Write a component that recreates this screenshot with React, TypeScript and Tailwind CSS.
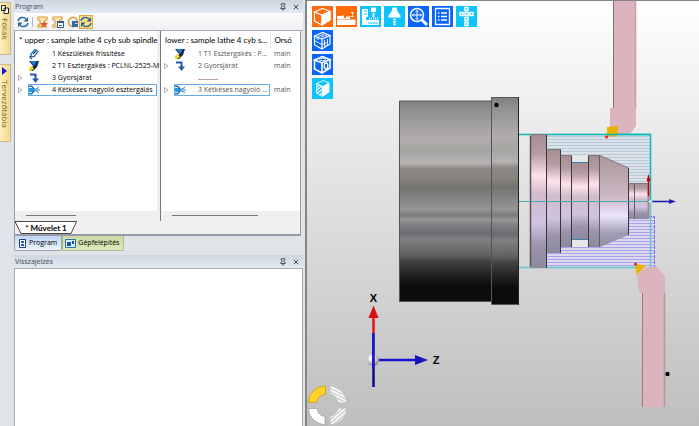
import { ReactNode } from "react";
import { Pin, X } from "lucide-react";

interface Operation {
  label: string;
  icon?: "clamp" | "tool" | "rapid" | "twin";
  expandable?: boolean;
  selected?: boolean;
  spindle?: string;
}

const UPPER: Operation[] = [
  { label: "1 Készülékek frissítése", icon: "clamp" },
  { label: "2 T1 Esztergakés : PCLNL-2525-M", icon: "tool" },
  { label: "3 Gyorsjárat", icon: "rapid", expandable: true },
  {
    label: "4 Kétkéses nagyoló esztergálás",
    icon: "twin",
    expandable: true,
    selected: true,
  },
];

const LOWER: Operation[] = [
  { label: "1 T1 Esztergakés : P...", icon: "tool", spindle: "main" },
  { label: "2 Gyorsjárat", icon: "rapid", expandable: true, spindle: "main" },
  { label: ".........." },
  {
    label: "3 Kétkéses nagyoló ...",
    icon: "twin",
    expandable: true,
    selected: true,
    spindle: "main",
  },
];

// ---------- Small icons ----------
function OperationIcon({ name }: { name: Operation["icon"] }) {
  return (
    <svg viewBox="0 0 12 12" className="h-3 w-3 shrink-0">
      {name === "clamp" && (
        <g fill="none" stroke="#2d6bb5" strokeWidth="1.3">
          <path d="m3 6 4-4.500 3 2-4 5.500-3-1z" />
          <path d="m5 6 3-3M3 8l-1 1 2 2" stroke="#17457e" />
        </g>
      )}
      {name === "tool" && (
        <g>
          <path d="M1 1h10L9 7l-4 4H2l3-5z" fill="#14294a" />
          <path d="M2 1h7L6 6z" fill="#2878cf" />
          <path d="m1 8 3-2 2 3-3 2H1z" fill="#f2d51d" />
        </g>
      )}
      {name === "rapid" && (
        <g>
          <path d="M2 2.500h5.500V8" fill="none" stroke="#2758a5" strokeWidth="2" />
          <path d="M4 6.500h7L7.500 11z" fill="#2758a5" />
        </g>
      )}
      {name === "twin" && (
        <g>
          <path d="M1 4h4l3 2-3 2H1z" fill="#1d9be0" />
          <path d="M1 1.500h3L7 5H5L3.500 3H1zM1 10.500h3L7 7H5L3.500 9H1z" fill="#2a69a8" />
          <path d="M7 6h5M7.500 5 11 3.500M7.500 7 11 8.500" fill="none" stroke="#3f7cb5" />
        </g>
      )}
    </svg>
  );
}

function RefreshIcon() {
  return (
    <svg viewBox="0 0 12 12" className="h-3 w-3">
      <path
        d="M1 5c1-4 6-4.500 8-2M11 7c-1 4-6 4.500-8 2"
        fill="none"
        stroke="#2b6fa5"
        strokeWidth="1.500"
      />
      <path d="M11 1v4.500H6.500zM1 11V6.500h4.500z" fill="#25628f" />
    </svg>
  );
}

function ScriptIcon({ kind }: { kind: "star" | "sheet" | "clock" }) {
  return (
    <svg viewBox="0 0 12 12" className="h-3 w-3">
      {kind === "clock" ? (
        <circle cx="6" cy="6" r="4.600" fill="#e8edf2" stroke="#e0a23a" strokeWidth="1.600" />
      ) : (
        <path
          d="M1 1h9v3H8v7H1V9h2V4H1z"
          fill="#ffe9b5"
          stroke="#dc9a35"
          strokeWidth="1.100"
        />
      )}
      {kind === "star" && (
        <path d="m7 5 1 2h3L9 9l1 3-3-2-3 2 1-3-2-2h3z" fill="#e65c1c" />
      )}
      {kind === "sheet" && (
        <g>
          <path d="M5.500 5.500h6v6h-6z" fill="#fff" stroke="#2c5f9c" />
          <path d="M5 5h7v2H5zM7 9h3v1H7z" fill="#2c5f9c" />
        </g>
      )}
      {kind === "clock" && <path d="M5 5h6v2H8v1h3v3H5z" fill="#2f69a6" />}
    </svg>
  );
}

// ---------- Dock panels ----------
function PanelTitle({ children }: { children: ReactNode }) {
  return (
    <header className="flex h-[13px] shrink-0 items-center bg-linear-to-b from-[#cdd6df] to-[#e2eaf3] pr-[3px] pl-px text-[#444a52]">
      <h2 className="flex-1">{children}</h2>
      <button type="button" aria-label="Rögzítés" className="mr-[5px]">
        <Pin className="h-2 w-2" strokeWidth={3} />
      </button>
      <button type="button" aria-label="Bezárás">
        <X className="h-2 w-2" strokeWidth={3} />
      </button>
    </header>
  );
}

function OperationTable({
  title,
  rows,
  muted,
}: {
  title: string;
  rows: Operation[];
  muted?: boolean;
}) {
  return (
    <table className="w-full table-fixed border-collapse text-left">
      <thead className="font-[Lato,sans-serif] text-[8px]">
        <tr className="h-[17px]">
          <th className="py-0 pr-0 pl-[4px] font-normal whitespace-nowrap text-black">{title}</th>
          {muted && (
            <th className="w-[30px] border-l border-[#e8e8e8] py-0 pr-0 pl-[4px] font-normal text-black">
              Orsó
            </th>
          )}
        </tr>
      </thead>
      <tbody className={muted ? "text-[#555]" : "text-black"}>
        {rows.map((row) => (
          <tr key={row.label} className="h-[12px]">
            <td className="p-0">
              <div className="flex h-[12px] items-center">
                <span className="flex w-[13px] shrink-0 justify-center">
                  {row.expandable && (
                    <svg viewBox="0 0 5 6" className="mr-[3px] h-[6px] w-[5px]">
                      <path d="M.5.5 4 3 .5 5.500z" fill="#fff" stroke="#999" strokeWidth=".8" />
                    </svg>
                  )}
                </span>
                <div
                  className={
                    row.selected
                      ? "flex h-[12px] min-w-0 flex-1 items-center outline outline-[#67aee8] -outline-offset-1"
                      : "flex h-[12px] min-w-0 flex-1 items-center"
                  }
                >
                  <OperationIcon name={row.icon} />
                  {row.icon ? (
                    <span className="ml-[12px] whitespace-nowrap">{row.label}</span>
                  ) : (
                    <span className="ml-[12px] font-bold text-[#7a2a78]">{row.label}</span>
                  )}
                </div>
              </div>
            </td>
            {muted && <td className="py-0 pr-0 pl-[4px]">{row.spindle}</td>}
          </tr>
        ))}
      </tbody>
    </table>
  );
}

function ProgramPanel() {
  return (
    <section className="flex h-[251px] shrink-0 flex-col">
      <PanelTitle>Program</PanelTitle>
      <div className="flex h-[18px] shrink-0 items-center border-b border-[#a8adb5] bg-linear-to-b from-[#fdfdfe] to-[#eef0f3] pl-[3px]">
        <button type="button" aria-label="Frissítés">
          <RefreshIcon />
        </button>
        <span className="mr-[4px] ml-[3px] h-[10px] w-px bg-[#b5b9be]" />
        <div className="flex items-center gap-[3px]">
          <button type="button" aria-label="Új">
            <ScriptIcon kind="star" />
          </button>
          <button type="button" aria-label="Lista">
            <ScriptIcon kind="sheet" />
          </button>
          <button type="button" aria-label="Idő">
            <ScriptIcon kind="clock" />
          </button>
        </div>
        <button
          type="button"
          aria-label="Automatikus frissítés"
          aria-pressed="true"
          className="border border-[#dfa93c] bg-[#ffdf83]"
        >
          <RefreshIcon />
        </button>
      </div>

      <div className="mr-[2px] flex min-h-0 flex-1 flex-col border-r border-b-2 border-l border-[#959ba8] bg-[#efefef]">
        <div className="flex min-h-0 flex-1">
          <div className="flex w-[142px] flex-col">
            <div className="flex-1 bg-white">
              <OperationTable title="* upper : sample lathe 4 cyb sub spindle" rows={UPPER} />
            </div>
            <div className="h-[10px]">
              <div className="mt-[4px] ml-[11px] h-px w-[50px] bg-[#777]" />
            </div>
          </div>
          <div className="ml-[3px] flex min-w-0 flex-1 flex-col border-l border-[#777]">
            <div className="flex-1 bg-white">
              <OperationTable title="lower : sample lathe 4 cyb s..." rows={LOWER} muted />
            </div>
            <div className="h-[10px]">
              <div className="mt-[4px] ml-[11px] h-px w-[86px] bg-[#777]" />
            </div>
          </div>
        </div>
        <button
          type="button"
          className="relative h-[13px] w-[62px] font-[Lato,sans-serif] text-[8px] font-bold text-black"
        >
          <svg viewBox="0 0 62 13" className="absolute inset-0 h-full w-full">
            <path d="M0 .5h61.500L56 12.500H6z" fill="#fff" stroke="#333" strokeWidth=".9" />
          </svg>
          <span className="relative">* Művelet 1</span>
        </button>
      </div>

      <nav className="flex h-[15px] shrink-0">
        <button
          type="button"
          className="flex items-center gap-[3px] rounded-b-[2px] border border-t-0 border-[#9aa1aa] bg-linear-to-b from-[#bfd4f4] to-[#edf4fc] px-[4px] text-black"
        >
          <svg viewBox="0 0 7 9" className="h-[9px] w-[7px]">
            <path d="M.5.5h6v8h-6z" fill="#fff" stroke="#223f9e" />
            <path d="M2 2h3v2H2zM2 5h3v2H2z" fill="#2850d8" />
          </svg>
          Program
        </button>
        <button
          type="button"
          className="flex items-center gap-[2px] rounded-b-[2px] border border-t-0 border-[#abc088] bg-linear-to-b from-[#cbdca6] to-[#d9e8b8] pr-[4px] pl-[2px] text-black"
        >
          <svg viewBox="0 0 11 9" className="h-[9px] w-[11px]">
            <path d="M.5.5h10v8H.5z" fill="#d6ebfb" stroke="#3170ad" />
            <path d="M2 3h4v4H2zM7 2h2v3H7z" fill="#195a9c" />
          </svg>
          Gépfelépítés
        </button>
      </nav>
    </section>
  );
}

// ---------- View toolbar ----------
function ViewButton({
  label,
  className,
  children,
}: {
  label: string;
  className: string;
  children: ReactNode;
}) {
  return (
    <button type="button" aria-label={label} className={`h-[21px] w-[21px] ${className}`}>
      <svg viewBox="0 0 21 21" fill="none" stroke="#fff" className="h-full w-full">
        {children}
      </svg>
    </button>
  );
}

function ViewToolbar() {
  return (
    <div className="absolute top-[5px] left-[5px] flex flex-col gap-[3px]">
      <div className="flex gap-[3px]">
        <ViewButton label="Munkadarab" className="bg-[#ff6a0a]">
          <path d="m2.500 6 8-3.500 7.500 3-8 3.500zM2.500 6v9l7.500 4V9M18 5.500V14l-8 5" strokeWidth="1.300" />
          <path d="m10 9 8-3.500V14l-8 5z" fill="#fff" />
        </ViewButton>
        <ViewButton label="Gép" className="bg-[#ff6a0a]">
          <path d="M1 13.500h18.500V19H1zM1 10h4v2H1zM5 9.500h3V12H5zM10 10.500h4V12h-4z" fill="#fff" stroke="none" />
          <path d="M1 12.500h13M16.500 6v3.500M15 6.500h2.500M14.500 10.500h3" />
        </ViewButton>
        <ViewButton label="Gépház" className="bg-[#0cc3fb]">
          <path d="M2 3h6v8H6v3h13v5H2zM11 1.500h5V6h-5zM12.500 7h2v4h-2z" fill="#fff" stroke="none" />
          <path d="M4 5h3M4 8h3M8 17h10" stroke="#0cc3fb" />
          <path d="M9 12.500h10" strokeDasharray="1 1" strokeWidth="2" />
        </ViewButton>
        <ViewButton label="Szerszám" className="bg-[#0cc3fb]">
          <path d="M8.500 1.500h4l1 4 3 4v2h-12v-2l3-4z" fill="#fff" stroke="none" />
          <path d="M10.500 12.500v7" strokeWidth="2.500" strokeDasharray="1.800 .7" />
        </ViewButton>
        <ViewButton label="Nagyítás" className="bg-[#0964fa]">
          <circle cx="9" cy="9" r="6.500" strokeWidth="1.500" />
          <path d="m13.500 13.500 5.500 5.500" strokeWidth="3" />
          <path d="M9 4.500v9M4.500 9h9M7.500 6 9 4.500 10.500 6M7.500 12 9 13.500l1.500-1.500M6 7.500 4.500 9 6 10.500M12 7.500 13.500 9 12 10.500" />
        </ViewButton>
        <ViewButton label="Lista" className="bg-[#0964fa]">
          <path d="M3.500 2.500h14v16h-14z" strokeWidth="1.300" />
          <path d="M6 7h1.500M9 7h6M6 10.500h1.500M9 10.500h6M6 14h1.500M9 14h6" strokeWidth="1.300" />
        </ViewButton>
        <ViewButton label="Nézetek" className="bg-[#0cc3fb]">
          <path
            d="M9 1.500h3v3H9zM4 6.500h3v3H4zM9 6.500h3v3H9zM14 6.500h3v3h-3zM9 11.500h3v3H9zM9 16.500h3v3H9z"
            strokeWidth="1.500"
          />
        </ViewButton>
      </div>
      <ViewButton label="Drótváz" className="bg-[#0964fa]">
        <path d="m2.500 6 8-3.500 7.500 3-8 3.500zM2.500 6v9l7.500 4V9M18 5.500V14l-8 5" strokeWidth="1.200" />
        <path d="m3 11 7 3.500 5-2M6 6.500l6-2.500M9 7l6-2M4 8l3 1.500M12.500 10v6.500l3-1.500V9" strokeWidth=".9" />
      </ViewButton>
      <ViewButton label="Furatok" className="bg-[#0964fa]">
        <path d="m2.500 6 8-3.500 7.500 3-8 3.500zM2.500 6v9l7.500 4V9M18 5.500V14l-8 5" strokeWidth="1.600" />
        <ellipse cx="10.500" cy="5.500" rx="3" ry="1.300" />
        <ellipse cx="14" cy="12" rx="1.800" ry="3" strokeWidth="1.300" />
      </ViewButton>
      <ViewButton label="Metszet" className="bg-[#0cc3fb]">
        <path d="m4.500 5.500 7-3 5.500 2.500-6 3.500zM4.500 5.500V15l6 3.500v-10" strokeWidth=".9" />
        <path d="m11 9 6-3.500v8.500l-6 4z" fill="#fff" />
        <path d="m4.500 9.500 3-2.500M4.500 12.500l5.500-4.500M5 15.500l5.500-4.500M7.500 17l3-2.500" strokeWidth="1.200" />
      </ViewButton>
    </div>
  );
}

// ---------- Lathe scene ----------
function LatheScene() {
  return (
    <svg viewBox="307 1 392 425" className="block h-[425px] w-[392px]">
      <defs>
        <linearGradient id="metal" x1="0" y1="0" x2="0" y2="1">
          <stop offset="0" stopColor="#828182" />
          <stop offset=".07" stopColor="#969496" />
          <stop offset=".19" stopColor="#b1adaf" />
          <stop offset=".25" stopColor="#a5a4a1" />
          <stop offset=".31" stopColor="#b5b3b3" />
          <stop offset=".34" stopColor="#8d8883" />
          <stop offset=".39" stopColor="#86837d" />
          <stop offset=".43" stopColor="#73726d" />
          <stop offset=".49" stopColor="#868486" />
          <stop offset=".54" stopColor="#969592" />
          <stop offset=".57" stopColor="#7b7b7d" />
          <stop offset=".59" stopColor="#979797" />
          <stop offset=".62" stopColor="#7f7f83" />
          <stop offset=".66" stopColor="#696c71" />
          <stop offset=".69" stopColor="#808080" />
          <stop offset=".77" stopColor="#606060" />
          <stop offset=".8" stopColor="#404040" />
          <stop offset=".88" stopColor="#1c1c1c" />
          <stop offset=".92" stopColor="#0c0c0c" />
        </linearGradient>
        <linearGradient id="part" x1="0" y1="0" x2="0" y2="1">
          <stop offset="0" stopColor="#a58d92" />
          <stop offset=".15" stopColor="#b59da3" />
          <stop offset=".31" stopColor="#ffe2eb" />
          <stop offset=".45" stopColor="#d0bccb" />
          <stop offset=".67" stopColor="#cfc3e0" />
          <stop offset=".83" stopColor="#9b95ac" />
          <stop offset="1" stopColor="#8c889d" />
        </linearGradient>
        <linearGradient id="cone" x1="0" y1="0" x2="0" y2="1">
          <stop offset="0" stopColor="#a8969b" />
          <stop offset=".45" stopColor="#cdb9c4" />
          <stop offset=".66" stopColor="#e9e4fc" />
          <stop offset=".85" stopColor="#a29db4" />
          <stop offset="1" stopColor="#918da2" />
        </linearGradient>
        <pattern id="upperCut" width="8" height="3" patternUnits="userSpaceOnUse">
          <path d="M0 0h8v3H0z" fill="#dde2e6" />
          <path d="M0 1.500h8" stroke="#b3c9e0" />
        </pattern>
        <pattern id="lowerCut" width="8" height="3" patternUnits="userSpaceOnUse">
          <path d="M0 0h8v3H0z" fill="#dbd9ec" />
          <path d="M0 1.500h8" stroke="#aaa2f0" />
        </pattern>
        <pattern id="ringHatch" width="3" height="3" patternUnits="userSpaceOnUse" patternTransform="rotate(25)">
          <path d="M0 1h3" stroke="#fff" strokeWidth="1.800" />
        </pattern>
        <pattern id="ringHatchUp" width="3" height="3" patternUnits="userSpaceOnUse" patternTransform="rotate(-40)">
          <path d="M0 1h3" stroke="#fff" strokeWidth="1.800" />
        </pattern>
        <radialGradient id="ball" cx=".4" cy=".35" r=".7">
          <stop offset=".2" stopColor="#fff" />
          <stop offset="1" stopColor="#7d7d7d" />
        </radialGradient>
      </defs>

      {/* Chuck */}
      <path d="M399.500 101h92v200.500h-92z" fill="url(#metal)" stroke="#555" />
      <path d="M491.500 97.500h27v207h-27z" fill="url(#metal)" stroke="#555" />
      <path d="M518.500 97v208" stroke="#222" />
      <circle cx="496.500" cy="105" r="2.200" />

      {/* Removed material */}
      <path d="M546 135h104v50H546z" fill="url(#upperCut)" />
      <path d="M546 217h108v50H546z" fill="url(#lowerCut)" />
      <path d="M628 216.500h26.500V267" fill="none" stroke="#7768ee" strokeDasharray="4 1" />

      {/* Tools */}
      <path d="M613 1h23v125l-6 8h-20l0-26h3z" fill="#dcb4bd" />
      <path d="M613.500 1v107" stroke="#8c6b72" />
      <path d="M635.500 1v107" stroke="#bda3aa" strokeWidth="1.500" />
      <path d="M642 407V293h-3l-2-19 9-7h11l8 9v131z" fill="#dcb4bd" />
      <path d="M642.500 293v114" stroke="#9b7b81" />
      <path d="M664.500 293v114" stroke="#b9969d" strokeWidth="1.500" />

      {/* Stock outline */}
      <path d="M519 134.500h131.500v66" fill="none" stroke="#0ab7ba" strokeWidth="1.500" />
      <path d="M650.500 200v67.500M519 267.500h118" fill="none" stroke="#66c7c8" strokeWidth="1.500" />

      {/* Workpiece */}
      <path d="M571 156h17v91h-17z" fill="#e6e7e8" />
      <g fill="url(#part)">
        <rect x="530" y="134" width="16.500" height="134" rx="1" />
        <rect x="546.500" y="149" width="14" height="104" />
        <rect x="560.500" y="155.500" width="10.500" height="91.500" />
        <rect x="571" y="162.500" width="17.500" height="77" />
        <rect x="588.500" y="155.500" width="11.500" height="91.500" />
        <rect x="628.500" y="183" width="20.500" height="36" />
      </g>
      <path d="m600 155.500 28.500 12.500v67L600 247z" fill="url(#cone)" />
      <path d="m600 155.500 28.500 12.500" stroke="#83767c" />
      <path d="M530.500 136v130.500" stroke="#5f5358" strokeWidth="1.500" />
      <path
        d="M546.500 134v134M560.500 149v104M571.500 155.500V247M588.500 155.500V247M628.500 168v67"
        stroke="#39363b"
      />
      <path d="M599.500 155.500V247M634.500 183v36" stroke="#665a64" />
      <path d="M530 134.500h17M546.500 149.500h14M560.500 155.500H571M588.500 155.500H600M628.500 183.500H649" stroke="#84757a" />
      <path d="M572 162.500h16M572 239.500h16" stroke="#417fb3" />
      <path d="M648.500 184v34" stroke="#9a8b92" strokeWidth="2" />
      <path d="M519 201.500h131" stroke="#48a9ac" />

      {/* Inserts */}
      <path d="m607 127 11-1-.5 8-2 2.500H607z" fill="#e9b300" />
      <path d="M604 134.500h46" stroke="#0ab7ba" strokeWidth="1.500" />
      <path d="M635.500 264.500 646.500 265 636.500 275z" fill="#e9b300" />
      <circle cx="606.500" cy="137" r="1.500" fill="#f01818" />
      <circle cx="635.500" cy="264" r="1.500" fill="#f01818" />
      <circle cx="667.500" cy="374" r="2.200" />

      {/* Part origin */}
      <path d="M648.500 180v16" stroke="#c00" strokeWidth="1.500" />
      <path d="m648.500 174 2 7h-4z" fill="#c00" />
      <path d="M651 201.500h20" stroke="#1717a5" strokeWidth="1.500" />
      <path d="m669 199 7 2.500-7 2.500z" fill="#2424b4" />
      <circle cx="650.500" cy="201.500" r="1.800" fill="#dcebed" stroke="#72b7bb" strokeWidth=".6" />

      {/* View axes */}
      <circle cx="373" cy="360" r="6" fill="url(#ball)" />
      <path d="M373.500 333v54" stroke="#09098e" strokeWidth="2.500" />
      <path d="M373 333v36" stroke="#1616df" strokeWidth="2" />
      <path d="M373.500 316v17" stroke="#e31515" strokeWidth="2.500" />
      <path d="m373.500 305.500 5 12.500h-10z" fill="#d81010" />
      <path d="M379 360h38" stroke="#1616c9" strokeWidth="2.500" />
      <path d="m415 355 13 5-13 5z" fill="#1717bd" />
      <g fontFamily="Liberation Sans, sans-serif" fontSize="11" fontWeight="bold" textAnchor="middle">
        <text x="373.500" y="302">X</text>
        <text x="436" y="364">Z</text>
      </g>

      {/* Quadrant ring */}
      <path d="M308.500 402.500c0-9 8-16.500 17-16.500v8c-5 1-8 4-9 8.500z" fill="#ffd22c" stroke="#d6a50c" />
      <path d="M308.500 408.500c0 9 8 16 16.500 16v-8c-5-1-7-3-8-8z" fill="#fff" stroke="#999" strokeWidth=".7" />
      <path d="M330.500 386c9 1 15 8 16 16.500h-8c-1-5-4-8-8-9z" fill="url(#ringHatch)" />
      <path d="M346.500 408.500c-1 9-7 15-16 16v-8c4-1 7-4 8-8z" fill="url(#ringHatchUp)" />
    </svg>
  );
}

export default function App() {
  return (
    <div className="flex h-screen overflow-hidden bg-[#e0e4e9] font-['Open_Sans',sans-serif] text-[7px] leading-[12px]">
      {/* Collapsed side tabs */}
      <aside className="flex w-[14px] shrink-0 flex-col gap-[9px] pt-[2px] pr-[3px] text-[8px] text-[#765d2c]">
        <button
          type="button"
          className="flex h-[53px] w-full flex-col items-center gap-[4px] border border-l-0 border-[#c9b98f] bg-linear-to-r from-[#fdf0bd] to-[#f4d98a] pt-[2px]"
        >
          <svg viewBox="0 0 8 9" className="h-[9px] w-2 shrink-0">
            <path d="M.5.5h4v5h-4zM3 3h4.500v5.500H3z" fill="#fff" stroke="#222" />
          </svg>
          <span className="[writing-mode:vertical-rl]">Fóliák</span>
        </button>
        <button
          type="button"
          className="flex h-[78px] w-full flex-col items-center gap-[5px] border border-l-0 border-[#c9b98f] bg-linear-to-r from-[#fdf0bd] to-[#f4d98a] pt-[2px]"
        >
          <svg viewBox="0 0 8 8" className="h-2 w-2 shrink-0">
            <path d="m1 0 5 4-5 4z" fill="#1414d8" />
          </svg>
          <span className="[writing-mode:vertical-rl]">Tervezőtábla</span>
        </button>
      </aside>

      <div className="flex w-[289px] shrink-0 flex-col">
        <ProgramPanel />
        <div className="h-[4px] shrink-0" />
        <PanelTitle>Visszajelzés</PanelTitle>
        <section className="flex-1 border border-b-0 border-[#a8adb5] bg-white" />
      </div>

      <main className="relative ml-[2px] min-w-0 flex-1 overflow-hidden border-t border-l-2 border-[#858585] bg-linear-to-b from-white to-[#bebebe]">
        <LatheScene />
        <ViewToolbar />
      </main>
    </div>
  );
}
